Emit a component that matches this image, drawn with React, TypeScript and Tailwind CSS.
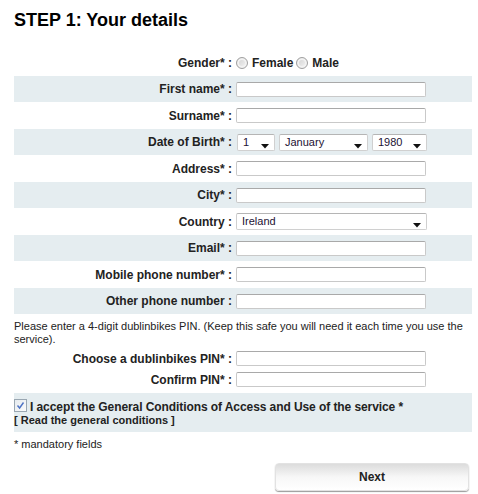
import React from "react";

const shade = "bg-[#e5edf0]";

function TextBox() {
  return (
    <input
      type="text"
      className="ml-[4px] w-[190px] h-[15px] bg-white border border-[#c9c9c9] border-t-[#a9a9a9] rounded-[2px] outline-none"
    />
  );
}

function Arrow() {
  return (
    <svg width="8" height="5" viewBox="0 0 8 5" className="absolute right-[5px] top-[9px]">
      <path d="M0 0 L8 0 L4 4.5 Z" fill="#111" />
    </svg>
  );
}

function Select({ value, width, className = "" }: { value: string; width: string; className?: string }) {
  return (
    <div
      className={`relative h-[17px] bg-white border border-[#d0d0d0] border-t-[#b5b5b5] rounded-[2px] text-[11px] leading-[15px] pl-[5px] text-[#221133] ${width} ${className}`}
    >
      {value}
      <Arrow />
    </div>
  );
}

function Radio() {
  return (
    <span className="inline-block w-[12px] h-[12px] rounded-full border border-[#a0a0a0] bg-gradient-to-br from-[#d0d0d0] to-[#f6f6f6] shadow-[inset_0_0_0_2px_#f2f2f2]" />
  );
}

function Row({
  label,
  shaded,
  children,
}: {
  label: string;
  shaded?: boolean;
  children: React.ReactNode;
}) {
  return (
    <div className={`flex items-center ${shaded ? `h-[26px] ${shade}` : "h-[27px]"}`}>
      <div className="w-[218px] text-right font-bold text-[12px] text-[#222] whitespace-nowrap">{label}</div>
      {children}
    </div>
  );
}

function PinRow({ label }: { label: string }) {
  return (
    <div className="flex items-center h-[21px]">
      <div className="w-[218px] text-right font-bold text-[12px] text-[#222] whitespace-nowrap">{label}</div>
      <TextBox />
    </div>
  );
}

export default function App() {
  return (
    <div
      className="w-[478px] h-[494px] bg-white pl-[14px] pr-[6px] pt-[10px] text-[#222]"
      style={{ fontFamily: '"Liberation Sans", Arial, sans-serif' }}
    >
      <h1 className="text-[18px] leading-[20px] font-bold text-black h-[39px]">STEP 1: Your details</h1>

      <div className="w-[458px]">
        <Row label="Gender* :">
          <div className="ml-[4px] flex items-center gap-[4px] font-bold text-[12px] pt-[1px]">
            <Radio />
            <span className="mr-[-1px]">Female</span>
            <Radio />
            <span>Male</span>
          </div>
        </Row>
        <Row label="First name* :" shaded>
          <TextBox />
        </Row>
        <Row label="Surname* :">
          <TextBox />
        </Row>
        <Row label="Date of Birth* :" shaded>
          <div className="ml-[5px] flex items-center gap-[4px]">
            <Select value="1" width="w-[38px]" />
            <Select value="January" width="w-[89px]" />
            <Select value="1980" width="w-[55px]" />
          </div>
        </Row>
        <Row label="Address* :">
          <TextBox />
        </Row>
        <Row label="City* :" shaded>
          <TextBox />
        </Row>
        <Row label="Country :">
          <Select value="Ireland" width="w-[191px]" className="ml-[4px]" />
        </Row>
        <Row label="Email* :" shaded>
          <TextBox />
        </Row>
        <Row label="Mobile phone number* :">
          <TextBox />
        </Row>
        <Row label="Other phone number :" shaded>
          <TextBox />
        </Row>

        <p className="mt-[6px] text-[11px] leading-[13px]">
          Please enter a 4-digit dublinbikes PIN. (Keep this safe you will need it each time you use the service).
        </p>

        <div className="mt-[2px]">
          <PinRow label="Choose a dublinbikes PIN* :" />
          <PinRow label="Confirm PIN* :" />
        </div>

        <div className={`mt-[3px] h-[39px] pt-[7px] ${shade}`}>
          <div className="flex items-start gap-[3px] text-[12px] leading-[14px] font-bold tracking-[-0.08px]">
            <span className="mt-[-1px] w-[13px] h-[13px] border border-[#9aa7b2] bg-gradient-to-br from-[#e6ebef] to-[#fbfbfb] flex items-center justify-center">
              <svg width="9" height="9" viewBox="0 0 9 9">
                <path d="M1.5 4.5 L3.6 7 L7.5 1.5" stroke="#4d72c4" strokeWidth="1.4" fill="none" />
              </svg>
            </span>
            <span>I accept the General Conditions of Access and Use of the service *</span>
          </div>
          <div className="text-[11px] leading-[13px] font-bold">[ Read the general conditions ]</div>
        </div>

        <p className="mt-[6px] text-[11px] leading-[13px]">* mandatory fields</p>

        <div className="flex justify-end mt-[12px] pr-[3px]">
          <button className="w-[194px] h-[28px] rounded-[4px] border border-[#e2e2e2] bg-gradient-to-b from-[#dcdcdc] via-[#f7f7f7] to-white shadow-[0_1px_1px_#9a9a9a] font-bold text-[12px] text-[#222]">
            Next
          </button>
        </div>
      </div>
    </div>
  );
}
